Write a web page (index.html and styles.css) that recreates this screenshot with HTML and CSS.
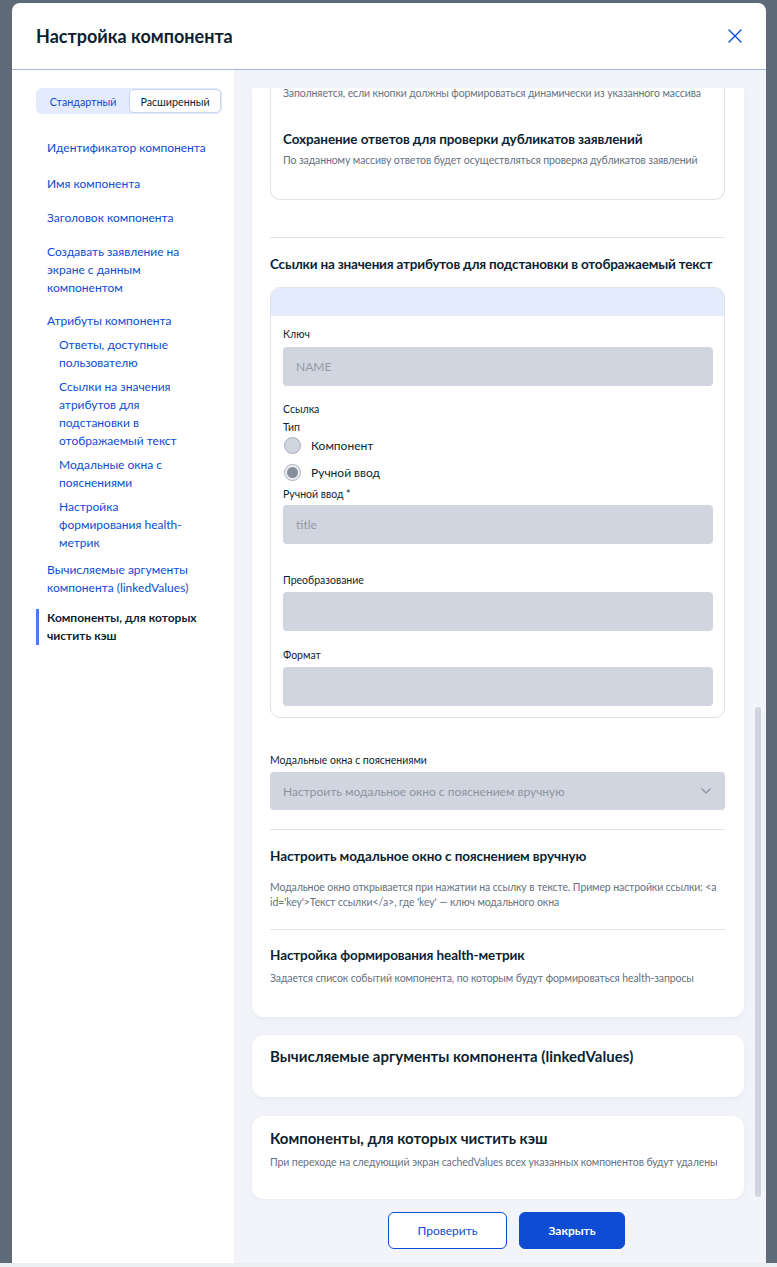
FILE: index.html
```html
<!DOCTYPE html>
<html lang="ru">
<head>
<meta charset="utf-8">
<title>Настройка компонента</title>
<link rel="stylesheet" href="styles.css">
</head>
<body>
<div class="overlay">
  <div class="modal">
    <header class="modal-header">
      <h1 class="modal-title">Настройка компонента</h1>
      <button class="close-btn" aria-label="Закрыть">
        <svg width="14" height="14" viewBox="0 0 14 14"><path d="M1 1 L13 13 M13 1 L1 13" stroke="#0d4cd3" stroke-width="1.4" fill="none" stroke-linecap="round"/></svg>
      </button>
    </header>
    <div class="modal-body">
      <aside class="sidebar">
        <div class="seg">
          <span class="seg-item">Стандартный</span>
          <span class="seg-item seg-active">Расширенный</span>
        </div>
        <nav class="nav">
          <a class="nav-item">Идентификатор компонента</a>
          <a class="nav-item nav-tight">Имя компонента</a>
          <a class="nav-item nav-tight">Заголовок компонента</a>
          <a class="nav-item nav-before-parent">Создавать заявление на экране с данным компонентом</a>
          <a class="nav-item nav-parent">Атрибуты компонента</a>
          <div class="nav-sub">
            <a class="nav-subitem">Ответы, доступные пользователю</a>
            <a class="nav-subitem">Ссылки на значения атрибутов для подстановки в отображаемый текст</a>
            <a class="nav-subitem">Модальные окна с пояснениями</a>
            <a class="nav-subitem">Настройка формирования health-метрик</a>
          </div>
          <a class="nav-item nav-after-sub">Вычисляемые аргументы компонента (linkedValues)</a>
          <a class="nav-item nav-active">Компоненты, для которых чистить кэш</a>
        </nav>
      </aside>
      <main class="main">
        <div class="scroll">
          <div class="scroll-content">
            <section class="card card-main">
              <div class="box box-cut">
                <p class="desc desc-first">Заполняется, если кнопки должны формироваться динамически из указанного массива</p>
                <h3 class="sub-title">Сохранение ответов для проверки дубликатов заявлений</h3>
                <p class="desc desc-after">По заданному массиву ответов будет осуществляться проверка дубликатов заявлений</p>
              </div>
              <hr class="divider divider-1">
              <h3 class="sub-title links-title">Ссылки на значения атрибутов для подстановки в отображаемый текст</h3>
              <div class="box box-links">
                <div class="box-band"></div>
                <div class="box-inner">
                  <div class="label label-key">Ключ</div>
                  <div class="input input-key"><span class="placeholder">NAME</span></div>
                  <div class="label label-link">Ссылка</div>
                  <div class="label label-type">Тип</div>
                  <div class="radio-row"><span class="radio"></span><span class="radio-text">Компонент</span></div>
                  <div class="radio-row radio-row-2"><span class="radio radio-checked"><span class="radio-dot"></span></span><span class="radio-text">Ручной ввод</span></div>
                  <div class="label label-manual">Ручной ввод *</div>
                  <div class="input input-manual"><span class="placeholder">title</span></div>
                  <div class="label label-transform">Преобразование</div>
                  <div class="input"></div>
                  <div class="label label-format">Формат</div>
                  <div class="input"></div>
                </div>
              </div>
              <div class="label label-modals">Модальные окна с пояснениями</div>
              <div class="select">
                <span class="select-text">Настроить модальное окно с пояснением вручную</span>
                <svg class="chevron" width="10" height="6" viewBox="0 0 10 6"><path d="M1 1 L5 5 L9 1" stroke="#8a929e" stroke-width="1.3" fill="none" stroke-linecap="round" stroke-linejoin="round"/></svg>
              </div>
              <hr class="divider divider-2">
              <h3 class="sub-title modal-title-2">Настроить модальное окно с пояснением вручную</h3>
              <p class="desc desc-two">Модальное окно открывается при нажатии на ссылку в тексте. Пример настройки ссылки: &lt;a id='key'&gt;Текст ссылки&lt;/a&gt;, где 'key' — ключ модального окна</p>
              <hr class="divider divider-3">
              <h3 class="sub-title health-title">Настройка формирования health-метрик</h3>
              <p class="desc desc-health">Задается список событий компонента, по которым будут формироваться health-запросы</p>
            </section>
            <section class="card card-linked">
              <h2 class="card-title">Вычисляемые аргументы компонента (linkedValues)</h2>
            </section>
            <section class="card card-cache">
              <h2 class="card-title">Компоненты, для которых чистить кэш</h2>
              <p class="desc desc-cache">При переходе на следующий экран cachedValues всех указанных компонентов будут удалены</p>
            </section>
          </div>
          <div class="scrollbar"><div class="thumb"></div></div>
        </div>
        <footer class="footer">
          <button class="btn btn-outline">Проверить</button>
          <button class="btn btn-primary">Закрыть</button>
        </footer>
      </main>
    </div>
  </div>
</div>
</body>
</html>
```

FILE: styles.css
```css
* { box-sizing: border-box; }
html, body { margin: 0; padding: 0; }
body {
  background: #eceef1;
  font-family: Lato, "Noto Sans", sans-serif;
  color: #0b1f33;
  width: 777px;
  height: 1267px;
  overflow: hidden;
}
.overlay {
  height: 1263px;
  background: #5e6a78;
  padding: 3px 11px 0 12px;
}
.modal {
  height: 1260px;
  background: #fff;
  border-radius: 8px 8px 0 0;
  display: flex;
  flex-direction: column;
  overflow: hidden;
}
.modal-header {
  height: 67px;
  flex: none;
  border-bottom: 1px solid #a8b6da;
  display: flex;
  align-items: center;
  justify-content: space-between;
  padding: 0 24px 0 24px;
}
.modal-title {
  margin: 0;
  font-size: 18px;
  font-weight: 700;
  color: #0b1f33;
}
.close-btn {
  border: 0;
  background: none;
  padding: 0;
  width: 14px;
  height: 14px;
  display: flex;
  cursor: pointer;
}
.modal-body {
  flex: 1;
  display: flex;
  min-height: 0;
}
.sidebar {
  width: 222px;
  flex: none;
  background: #fff;
  padding: 18px 12px 0 24px;
}
.seg {
  display: flex;
  height: 26px;
  width: 186px;
  background: #e4ebfd;
  border-radius: 6px;
  padding: 1px;
  font-size: 10.7px;
}
.seg-item {
  flex: 1;
  display: flex;
  align-items: center;
  justify-content: center;
  color: #0d4cd3;
}
.seg-active {
  flex: none;
  width: 92px;
  background: #fff;
  border: 1px solid #c8d5f5;
  border-radius: 5px;
  color: #0b1f33;
}
.nav {
  display: flex;
  flex-direction: column;
  margin-top: 25px;
  padding-left: 11px;
  padding-right: 13px;
  font-size: 12px;
  line-height: 18px;
}
.nav-item {
  color: #0d4cd3;
  margin-bottom: 18px;
  cursor: pointer;
}
.nav-tight { margin-bottom: 16px; }
.nav-before-parent { margin-bottom: 15px; }
.nav-parent { margin-bottom: 6px; }
.nav-sub {
  display: flex;
  flex-direction: column;
  gap: 6px;
  padding-left: 12px;
  padding-right: 15px;
  margin-bottom: 9px;
}
.nav-subitem { color: #0d4cd3; cursor: pointer; }
.nav-after-sub { margin-bottom: 12px; }
.nav-active {
  color: #0b1f33;
  font-weight: 700;
  margin-left: -11px;
  padding-left: 8px;
  border-left: 3px solid #4a7cf4;
}
.main {
  flex: 1;
  background: #f2f4f9;
  display: flex;
  flex-direction: column;
  min-width: 0;
}
.scroll {
  position: relative;
  margin-top: 18px;
  height: 1112px;
  flex: none;
  overflow: hidden;
  padding: 0 22px 0 18px;
}
.scroll-content {
  display: flex;
  flex-direction: column;
  gap: 18px;
}
.scrollbar {
  position: absolute;
  right: 5px;
  top: 0;
  bottom: 0;
  width: 6px;
}
.thumb {
  position: absolute;
  left: 0;
  right: 0;
  top: 619px;
  height: 490px;
  background: #d0d5df;
  border-radius: 3px;
}
.card {
  background: #fff;
  border-radius: 12px;
  box-shadow: 0 2px 6px rgba(30, 50, 90, 0.05);
}
.card-main {
  border-radius: 0 0 12px 12px;
  padding: 0 19px 31px 18px;
}
.box {
  border: 1px solid #dfe2e8;
  border-radius: 10px;
}
.box-cut {
  border-top: 0;
  border-radius: 0 0 10px 10px;
  padding: 0 12px 31px 12px;
}
.desc {
  margin: 0;
  font-size: 10.5px;
  line-height: 16px;
  color: #66727f;
  letter-spacing: -0.1px;
}
.desc-first { margin-top: -3px; }
.sub-title {
  margin: 0;
  font-size: 13.5px;
  line-height: 20px;
  font-weight: 700;
  color: #0b1f33;
  letter-spacing: -0.1px;
}
.box-cut .sub-title { margin-top: 28px; }
.desc-after { margin-top: 3px; }
.divider {
  border: 0;
  border-top: 1px solid #dfe2e8;
  margin: 0;
}
.divider-1 { margin-top: 37px; }
.links-title {
  margin-top: 16px;
  white-space: nowrap;
  letter-spacing: -0.2px;
}
.box-links {
  margin-top: 13px;
  overflow: hidden;
}
.box-band {
  height: 28px;
  background: #e4ebfd;
}
.box-inner {
  padding: 10px 11px 11px 12px;
}
.label {
  font-size: 10.5px;
  line-height: 16px;
  color: #0b1f33;
}
.input {
  height: 39px;
  background: #d0d5df;
  border-radius: 4px;
  display: flex;
  align-items: center;
  padding-left: 13px;
  margin-top: 4px;
}
.input-key { margin-top: 5px; }
.input-manual { margin-top: 3px; }
.placeholder {
  font-size: 12px;
  color: #939aa6;
}
.label-link { margin-top: 15px; }
.label-type { margin-top: 2px; }
.radio-row {
  display: flex;
  align-items: center;
  gap: 10px;
  height: 20px;
}
.radio-row-2 { margin-top: 7px; }
.radio {
  width: 17px;
  height: 17px;
  border-radius: 50%;
  border: 1px solid #a8afba;
  background: #d0d5df;
  display: flex;
  align-items: center;
  justify-content: center;
  margin-left: 1px;
}
.radio-checked { background: #eceef2; }
.radio-dot {
  width: 11px;
  height: 11px;
  border-radius: 50%;
  background: #868f9b;
}
.radio-text {
  font-size: 12px;
  color: #0b1f33;
}
.label-manual { margin-top: 4px; }
.label-transform { margin-top: 28px; }
.label-format { margin-top: 16px; }
.label-modals { margin-top: 34px; }
.select {
  margin-top: 4px;
  height: 38px;
  background: #d0d5df;
  border-radius: 4px;
  display: flex;
  align-items: center;
  justify-content: space-between;
  padding: 0 14px 0 13px;
}
.select-text {
  font-size: 12px;
  color: #8d95a1;
}
.divider-2 { margin-top: 19px; }
.modal-title-2 { margin-top: 16px; }
.desc-two { margin-top: 14px; line-height: 15px; }
.divider-3 { margin-top: 19px; }
.health-title { margin-top: 15px; }
.desc-health { margin-top: 5px; }
.card-linked {
  padding: 11px 18px 31px 18px;
}
.card-title {
  margin: 0;
  font-size: 15px;
  line-height: 20px;
  font-weight: 700;
  color: #0b1f33;
}
.card-cache {
  padding: 12px 18px 29px 18px;
  margin-top: 1px;
}
.desc-cache { margin-top: 6px; }
.footer {
  flex: 1;
  display: flex;
  justify-content: center;
  align-items: flex-start;
  gap: 12px;
  padding: 12px 5px 0 18px;
}
.btn {
  height: 37px;
  border-radius: 6px;
  font-family: Lato, "Noto Sans", sans-serif;
  font-size: 12px;
  cursor: pointer;
}
.btn-outline {
  width: 119px;
  background: #fff;
  border: 1px solid #0d4cd3;
  color: #0d4cd3;
}
.btn-primary {
  width: 106px;
  background: #0d4cd3;
  border: 1px solid #0d4cd3;
  color: #fff;
  font-weight: 700;
}
```
